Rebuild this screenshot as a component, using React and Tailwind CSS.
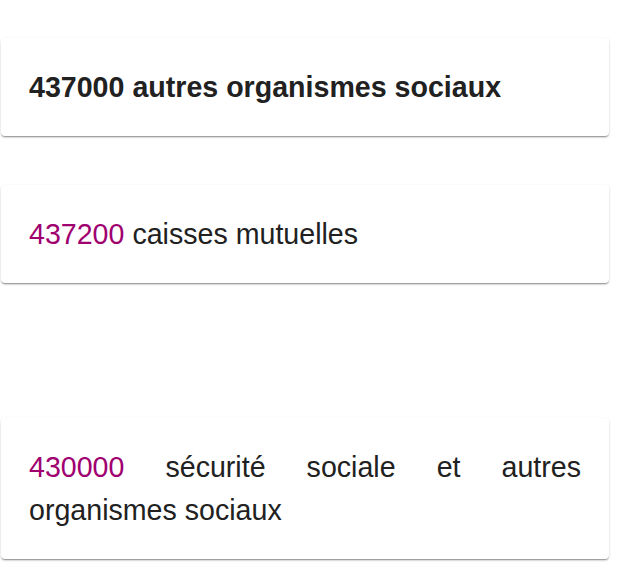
import React from 'react';

const accounts = [
  { id: 'parent', code: '437000', label: 'autres organismes sociaux', bold: true },
  { id: 'child', code: '437200', label: 'caisses mutuelles' },
  { id: 'root', code: '430000', label: 'sécurité sociale et autres organismes sociaux' },
];

const AccountCard = ({ account, className = '' }) => (
  <div
    className={`bg-white rounded-[4px] px-[28px] pt-[28px] pb-[27px] text-[28.6px] leading-[1.5] text-[#212121] text-justify shadow-[0_2px_2px_-1px_rgba(0,0,0,0.3),0_1px_1px_0_rgba(0,0,0,0.14),0_1px_3px_0_rgba(0,0,0,0.12)] ${className}`}
  >
    {account.bold ? (
      <p className="font-bold">
        {account.code} {account.label}
      </p>
    ) : (
      <p>
        <span className="text-[#a0006f]">{account.code}</span> {account.label}
      </p>
    )}
  </div>
);

export default function App() {
  return (
    <div className="min-h-screen bg-white font-['Liberation_Sans',Arial,sans-serif]">
      <div className="w-[608px] ml-px pt-[38px] pb-[11px] flex flex-col">
        <AccountCard account={accounts[0]} />
        <AccountCard account={accounts[1]} className="mt-[49px]" />
        <AccountCard account={accounts[2]} className="mt-[135px]" />
      </div>
    </div>
  );
}
